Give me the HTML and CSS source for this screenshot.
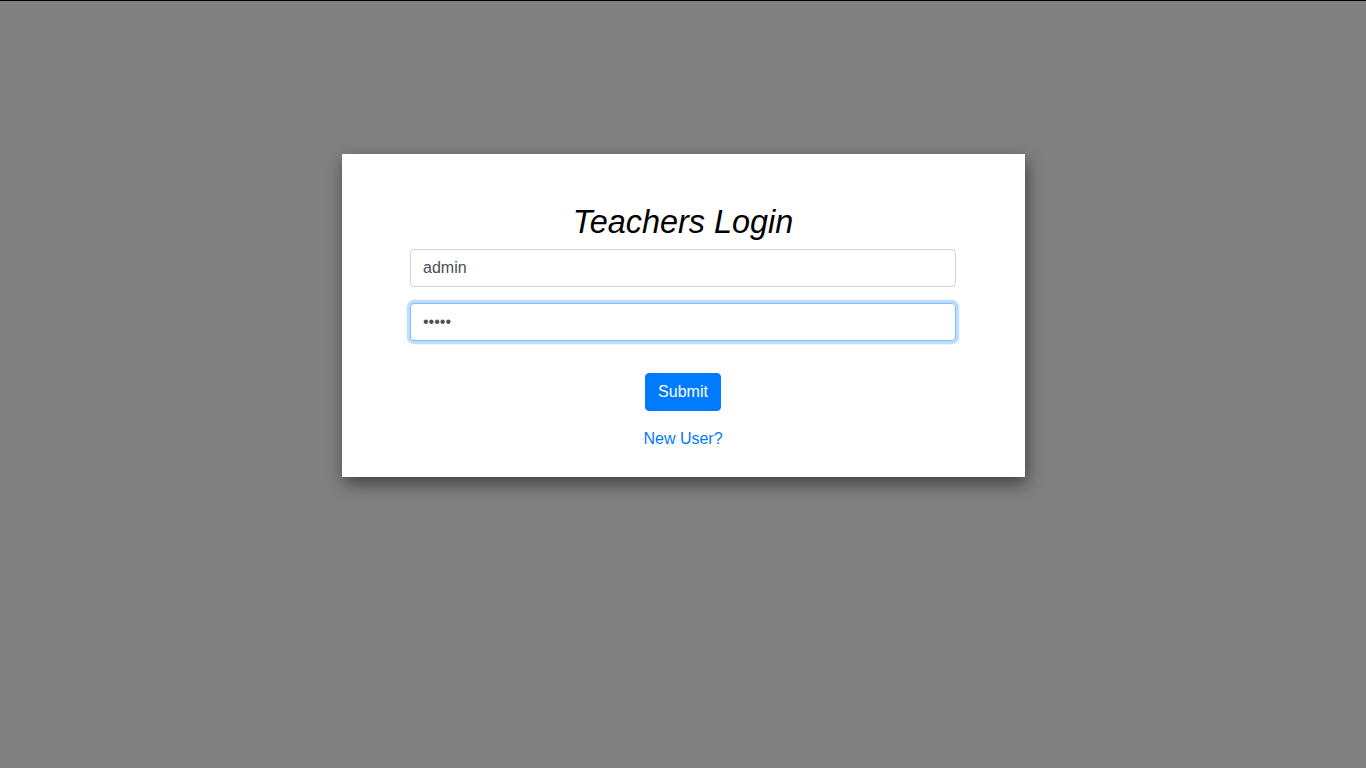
FILE: index.html
```html
<!DOCTYPE html>
<html lang="en">
<head>
<meta charset="utf-8">
<title>Teachers Login</title>
<link rel="stylesheet" href="styles.css">
</head>
<body>
<div class="page">
  <form class="card" onsubmit="return false;">
    <h1 class="title">Teachers Login</h1>
    <input class="field" type="text" value="admin">
    <input class="field field-focus" type="password" value="admin" autofocus>
    <button class="btn" type="submit">Submit</button>
    <a class="link" href="#">New User?</a>
  </form>
</div>
</body>
</html>
```
FILE: styles.css
```css
* { box-sizing: border-box; }
html, body { margin: 0; padding: 0; height: 100%; }
body {
  background: #808080;
  border-top: 1px solid #000;
  font-family: "Liberation Sans", Arial, sans-serif;
  font-size: 16px;
  line-height: 1.5;
  color: #212529;
}
.page {
  display: flex;
  justify-content: center;
  padding-top: 153px;
}
.card {
  width: 683px;
  background: #fff;
  box-shadow: 2px 7px 16px rgba(0, 0, 0, 0.48);
  padding: 49px 0 26px;
  display: flex;
  flex-direction: column;
  align-items: center;
}
.title {
  margin: 0 0 8px;
  font-size: 32.4px;
  font-weight: 400;
  font-style: italic;
  line-height: 38.4px;
  color: #000;
}
.field {
  width: 546px;
  height: 38px;
  padding: 6px 12px;
  font-family: inherit;
  font-size: 16px;
  line-height: 1.5;
  color: #495057;
  background: #fff;
  border: 1px solid #ced4da;
  border-radius: 4px;
  margin: 0 0 16px;
  outline: none;
}
.field-focus, .field:focus {
  border-color: #80bdff;
  box-shadow: 0 0 0 3.2px rgba(0, 123, 255, 0.25);
}
.btn {
  margin-top: 16px;
  height: 38px;
  padding: 6px 12px;
  font-family: inherit;
  font-size: 16px;
  line-height: 1.5;
  color: #fff;
  background: #007bff;
  border: 1px solid #007bff;
  border-radius: 4px;
  cursor: pointer;
}
.link {
  margin-top: 16px;
  color: #007bff;
  text-decoration: none;
  line-height: 24px;
}
```
